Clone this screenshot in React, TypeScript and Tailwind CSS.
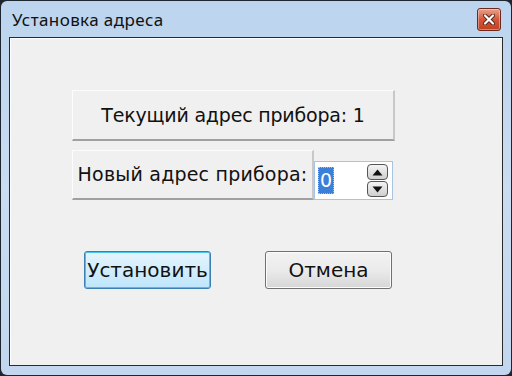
import { useState } from "react";

function CloseButton() {
    return (
        <div className="w-[24px] h-[23px] rounded-[3px] border border-[#6b2a1e] bg-gradient-to-b from-[#eaa08c] via-[#d4553a] to-[#c2401f] flex items-center justify-center shadow-[inset_0_0_0_1px_rgba(255,255,255,0.35)]">
            <svg width="12" height="11" viewBox="0 0 12 11">
                <path
                    d="M2 1.5 L10 9.5 M10 1.5 L2 9.5"
                    stroke="#5a2418"
                    strokeWidth="4"
                    strokeLinecap="round"
                />
                <path
                    d="M2 1.5 L10 9.5 M10 1.5 L2 9.5"
                    stroke="#ffffff"
                    strokeWidth="2.2"
                    strokeLinecap="round"
                />
            </svg>
        </div>
    );
}

function SpinArrow({ up }: { up: boolean }) {
    return (
        <div className="w-[21px] h-[16px] rounded-[4px] border border-[#555] bg-gradient-to-b from-[#f4f4f4] to-[#cfcfcf] flex items-center justify-center">
            <svg width="11" height="7" viewBox="0 0 11 7">
                {up ? (
                    <path d="M0.5 6.5 L5.5 0.5 L10.5 6.5 Z" fill="#111" />
                ) : (
                    <path d="M0.5 0.5 L5.5 6.5 L10.5 0.5 Z" fill="#111" />
                )}
            </svg>
        </div>
    );
}

export default function App() {
    const [address] = useState(1);
    const [newAddress] = useState(0);

    return (
        <div className="w-[512px] h-[376px] bg-[#1d2530] p-[1px]">
            <div className="w-full h-full rounded-[6px] bg-gradient-to-b from-[#bcd4ee] via-[#c9dcf1] to-[#c2d7ef] flex flex-col px-[8px] pb-[9px] [font-family:'DejaVu_Sans',sans-serif]">
                <div className="h-[36px] flex items-center justify-between pl-[3px] pr-[2px]">
                    <span className="text-[17px] text-[#111] [font-family:'Noto_Sans',sans-serif] tracking-[0.4px] mt-[2px]">
                        Установка адреса
                    </span>
                    <CloseButton />
                </div>
                <div className="flex-1 border border-[#2a2a2a] bg-[#f0f0f0] shadow-[inset_1px_1px_0_#ffffff] flex flex-col pt-[52px] pl-[62px]">
                    <div className="w-[323px] h-[51px] bg-[#f0f0f0] border-t border-l border-t-[#fcfcfc] border-l-[#fcfcfc] border-b-2 border-r-2 border-b-[#a0a0a0] border-r-[#c8c8c8] flex items-center justify-center text-[19px] tracking-[-0.2px] text-[#111]">
                        Текущий адрес прибора: {address}
                    </div>
                    <div className="flex items-end mt-[9px]">
                        <div className="w-[242px] h-[50px] bg-[#f0f0f0] border-t border-l border-t-[#fcfcfc] border-l-[#fcfcfc] border-b-2 border-r-2 border-b-[#a0a0a0] border-r-[#c8c8c8] flex items-center justify-center text-[19px] tracking-[0.2px] text-[#111]">
                            Новый адрес прибора:
                        </div>
                        <div className="w-[79px] h-[39px] bg-white border border-[#a9c4e0] flex items-center justify-between pl-[3px] pr-[4px]">
                            <span className="bg-[#3a7fd8] text-white text-[19px] leading-[25px] px-[1px] border border-dotted border-[#bbb]">
                                {newAddress}
                            </span>
                            <div className="flex flex-col gap-[1px]">
                                <SpinArrow up />
                                <SpinArrow up={false} />
                            </div>
                        </div>
                    </div>
                    <div className="flex mt-[51px] pl-[12px] gap-[54px]">
                        <button className="w-[127px] h-[38px] rounded-[3px] border border-[#3c7fb1] bg-gradient-to-b from-[#e6f4fc] to-[#bee6fd] shadow-[inset_0_0_0_1px_#47c2f0] text-[20px] text-[#111]">
                            Установить
                        </button>
                        <button className="w-[127px] h-[38px] rounded-[3px] border border-[#707070] bg-gradient-to-b from-[#f2f2f2] via-[#ebebeb] to-[#d6d6d6] shadow-[inset_0_0_0_1px_#fbfbfb] text-[20px] text-[#111]">
                            Отмена
                        </button>
                    </div>
                </div>
            </div>
        </div>
    );
}
